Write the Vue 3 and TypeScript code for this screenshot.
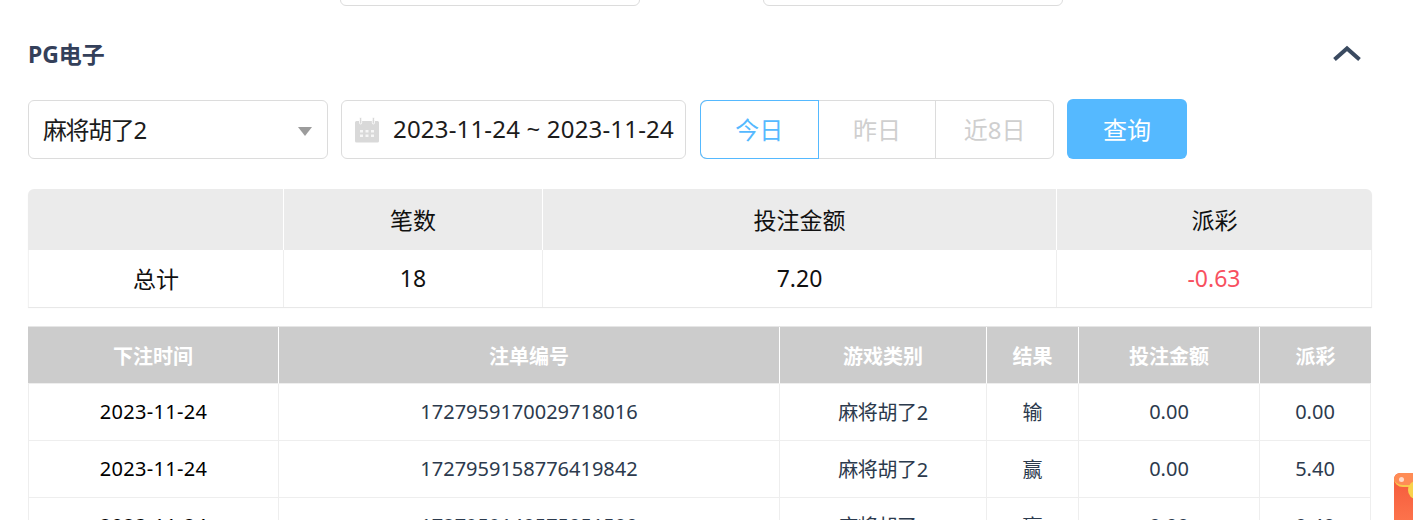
<script setup lang="ts">
interface Row { time: string; id: string; game: string; result: string; bet: string; payout: string }
const rows: Row[] = [
  { time: '2023-11-24', id: '1727959170029718016', game: '麻将胡了2', result: '输', bet: '0.00', payout: '0.00' },
  { time: '2023-11-24', id: '1727959158776419842', game: '麻将胡了2', result: '赢', bet: '0.00', payout: '5.40' },
  { time: '2023-11-24', id: '1727959140575051500', game: '麻将胡了2', result: '赢', bet: '0.00', payout: '0.40' }
]
const heads = ['下注时间', '注单编号', '游戏类别', '结果', '投注金额', '派彩']
</script>

<template>
  <div class="page">
    <div class="top-row">
      <div class="top-input"></div>
      <div class="top-input"></div>
    </div>

    <div class="title-row">
      <h2 class="title">PG电子</h2>
      <svg class="chevron" width="30" height="16" viewBox="0 0 30 16">
        <path d="M2.500 14.500 L15 3.500 L27.500 14.500" fill="none" stroke="#3a4a60" stroke-width="4" />
      </svg>
    </div>

    <div class="filters">
      <div class="box select">
        <span class="select-text">麻将胡了2</span>
        <i class="caret"></i>
      </div>
      <div class="box date">
        <svg class="cal" width="26" height="26" viewBox="0 0 26 26">
          <path fill="#d9d9d9" d="M1 5.500a1.500 1.500 0 0 1 1.500-1.500H5V3h3v1h10V3h3v1h2.500A1.500 1.500 0 0 1 25 5.500V24a1.500 1.500 0 0 1-1.500 1.500h-21A1.500 1.500 0 0 1 1 24z" />
          <rect x="5.500" y="0.500" width="2.200" height="6.500" rx="1.100" fill="#d9d9d9" stroke="#fff" stroke-width=".8" />
          <rect x="18.300" y="0.500" width="2.200" height="6.500" rx="1.100" fill="#d9d9d9" stroke="#fff" stroke-width=".8" />
          <path fill="#f6f6f6" d="M6 13h3v2.500H6zM11.500 13h3v2.500h-3zM17 13h3v2.500h-3zM6 17.500h3V20H6zM11.500 17.500h3V20h-3zM17 17.500h3V20h-3z" />
        </svg>
        <span class="date-text">2023-11-24 ~ 2023-11-24</span>
      </div>
      <div class="segment">
        <div class="seg active">今日</div>
        <div class="seg">昨日</div>
        <div class="seg">近8日</div>
      </div>
      <button class="query">查询</button>
    </div>

    <table class="summary">
      <colgroup>
        <col class="s1" /><col class="s2" /><col class="s3" /><col class="s4" />
      </colgroup>
      <thead>
        <tr><th></th><th>笔数</th><th>投注金额</th><th>派彩</th></tr>
      </thead>
      <tbody>
        <tr><td>总计</td><td>18</td><td>7.20</td><td class="neg">-0.63</td></tr>
      </tbody>
    </table>

    <table class="detail">
      <colgroup>
        <col class="d1" /><col class="d2" /><col class="d3" /><col class="d4" /><col class="d5" /><col class="d6" />
      </colgroup>
      <thead>
        <tr><th v-for="h in heads" :key="h">{{ h }}</th></tr>
      </thead>
      <tbody>
        <tr v-for="r in rows" :key="r.id">
          <td class="black">{{ r.time }}</td>
          <td>{{ r.id }}</td>
          <td class="game">{{ r.game }}</td>
          <td>{{ r.result }}</td>
          <td>{{ r.bet }}</td>
          <td>{{ r.payout }}</td>
        </tr>
      </tbody>
    </table>

    <div class="packet"><i class="flap"></i><i class="shine"></i><i class="coin"></i></div>
  </div>
</template>

<style>
html, body { margin: 0; background: #fff; }
</style>

<style scoped>
.page {
  position: relative;
  height: 520px;
  overflow: hidden;
  padding: 0 41px 0 28px;
  font-family: "Noto Sans", "Noto Sans CJK SC", sans-serif;
  color: #2c3a4d;
  background: #fff;
}
.top-row {
  display: flex;
  gap: 123px;
  padding-left: 312px;
  height: 6px;
  align-items: flex-end;
}
.top-input {
  width: 300px;
  height: 20px;
  flex: none;
  box-sizing: border-box;
  border: 1px solid #dcdcdc;
  border-radius: 6px;
}
.title-row {
  display: flex;
  justify-content: space-between;
  align-items: center;
  height: 40px;
  margin-top: 29px;
  padding-right: 10px;
}
.title {
  margin: 0;
  margin-top: -2px;
  font-size: 23px;
  line-height: 40px;
  font-weight: 700;
  color: #34405a;
  letter-spacing: -0.1px;
}
.chevron { margin-top: -5px; }
.filters {
  display: flex;
  align-items: center;
  height: 60px;
  margin-top: 24px;
  margin-bottom: 30px;
  font-size: 24px;
}
.box {
  box-sizing: border-box;
  height: 59px;
  margin-top: 1px;
  border: 1px solid #dcdcdc;
  border-radius: 6px;
  display: flex;
  align-items: center;
  color: #1c1c1c;
}
.select {
  width: 300px;
  padding: 0 15px 0 14px;
  justify-content: space-between;
}
.select-text { letter-spacing: -1.4px; margin-top: -3px; }
.caret {
  width: 0;
  height: 0;
  border-left: 7.500px solid transparent;
  border-right: 7.500px solid transparent;
  border-top: 9px solid #9c9c9c;
  margin-top: 3px;
}
.date {
  width: 345px;
  margin-left: 13px;
  padding-left: 12px;
  gap: 13px;
  white-space: nowrap;
}
.date-text { letter-spacing: 0.18px; margin-top: -2px; }
.cal { flex: none; }
.segment {
  display: flex;
  margin-left: 14px;
  margin-top: 1px;
  height: 59px;
  width: 354px;
  box-sizing: border-box;
  border: 1px solid #dcdcdc;
  border-radius: 6px;
  color: #cfcfcf;
}
.seg {
  flex: 1;
  display: flex;
  align-items: center;
  justify-content: center;
  border-left: 1px solid #dcdcdc;
  padding-bottom: 3px;
}
.seg:first-child { border-left: 0; }
.seg.active {
  color: #55b9ff;
  box-shadow: 0 0 0 1px #55b9ff;
  border-radius: 6px 0 0 6px;
  position: relative;
}
.query {
  width: 120px;
  height: 60px;
  margin-left: 13px;
  border: 0;
  border-radius: 6px;
  background: #55b9ff;
  color: #fff;
  font: inherit;
  padding: 0 0 2px;
}
table {
  table-layout: fixed;
  border-collapse: separate;
  border-spacing: 0;
}
.summary {
  width: 1344px;
  border-radius: 6px 6px 0 0;
  box-shadow: 0 1px 1px #e6e6e6;
  font-size: 23px;
  color: #111;
  margin-bottom: 19px;
}
.s1 { width: 255px; } .s2 { width: 259px; } .s3 { width: 514px; } .s4 { width: 316px; }
.summary th {
  height: 59px;
  padding: 0 0 2px;
  font-weight: 400;
  background: #ebebeb;
  border-left: 1px solid #fff;
}
.summary th:first-child { border-left: 0; border-top-left-radius: 6px; }
.summary th:last-child { border-top-right-radius: 6px; }
.summary td {
  height: 55px;
  padding: 0 0 2px;
  text-align: center;
  border-left: 1px solid #eeeeee;
}
.summary td:first-child { border-left-color: #f2f2f2; }
.summary td:last-child { border-right: 1px solid #eeeeee; }
.neg { color: #f8505f; }
.d1 { width: 250px; } .d2 { width: 501px; } .d3 { width: 207px; } .d4 { width: 92px; } .d5 { width: 181px; } .d6 { width: 112px; }
.detail { width: 1343px; font-size: 20px; border-top: 1px solid #e6e6e6; }
.detail th {
  height: 56px;
  padding: 0;
  background: #cccccc;
  color: #fff;
  font-weight: 700;
  font-size: 20px;
  border-left: 1px solid #fff;
  border-bottom: 1px solid #eeeeee;
}
.detail th:first-child { border-left: 0; }
.detail td {
  height: 54px;
  padding: 0 0 2px;
  text-align: center;
  border-left: 1px solid #eeeeee;
  border-bottom: 1px solid #eeeeee;
}
.detail td:last-child { border-right: 1px solid #eeeeee; }
.black { color: #000; letter-spacing: 0.3px; }
.game { letter-spacing: -0.4px; }
.packet {
  position: absolute;
  left: 1394px;
  top: 473px;
  width: 40px;
  height: 60px;
  border-radius: 6px;
  background: linear-gradient(#f4583a, #ff7a50);
  overflow: hidden;
}
.flap {
  position: absolute;
  left: 0;
  top: 0;
  width: 40px;
  height: 12px;
  background: #ff8c55;
  border-bottom: 2px solid #f9c84e;
  border-radius: 6px 6px 10px 10px;
}
.shine {
  position: absolute;
  left: 5px;
  top: 4px;
  width: 5px;
  height: 5px;
  border-radius: 50%;
  background: #ffd9c8;
}
.coin {
  position: absolute;
  left: 14px;
  top: 8px;
  width: 16px;
  height: 18px;
  border-radius: 50%;
  background: #f9d24c;
}
</style>
